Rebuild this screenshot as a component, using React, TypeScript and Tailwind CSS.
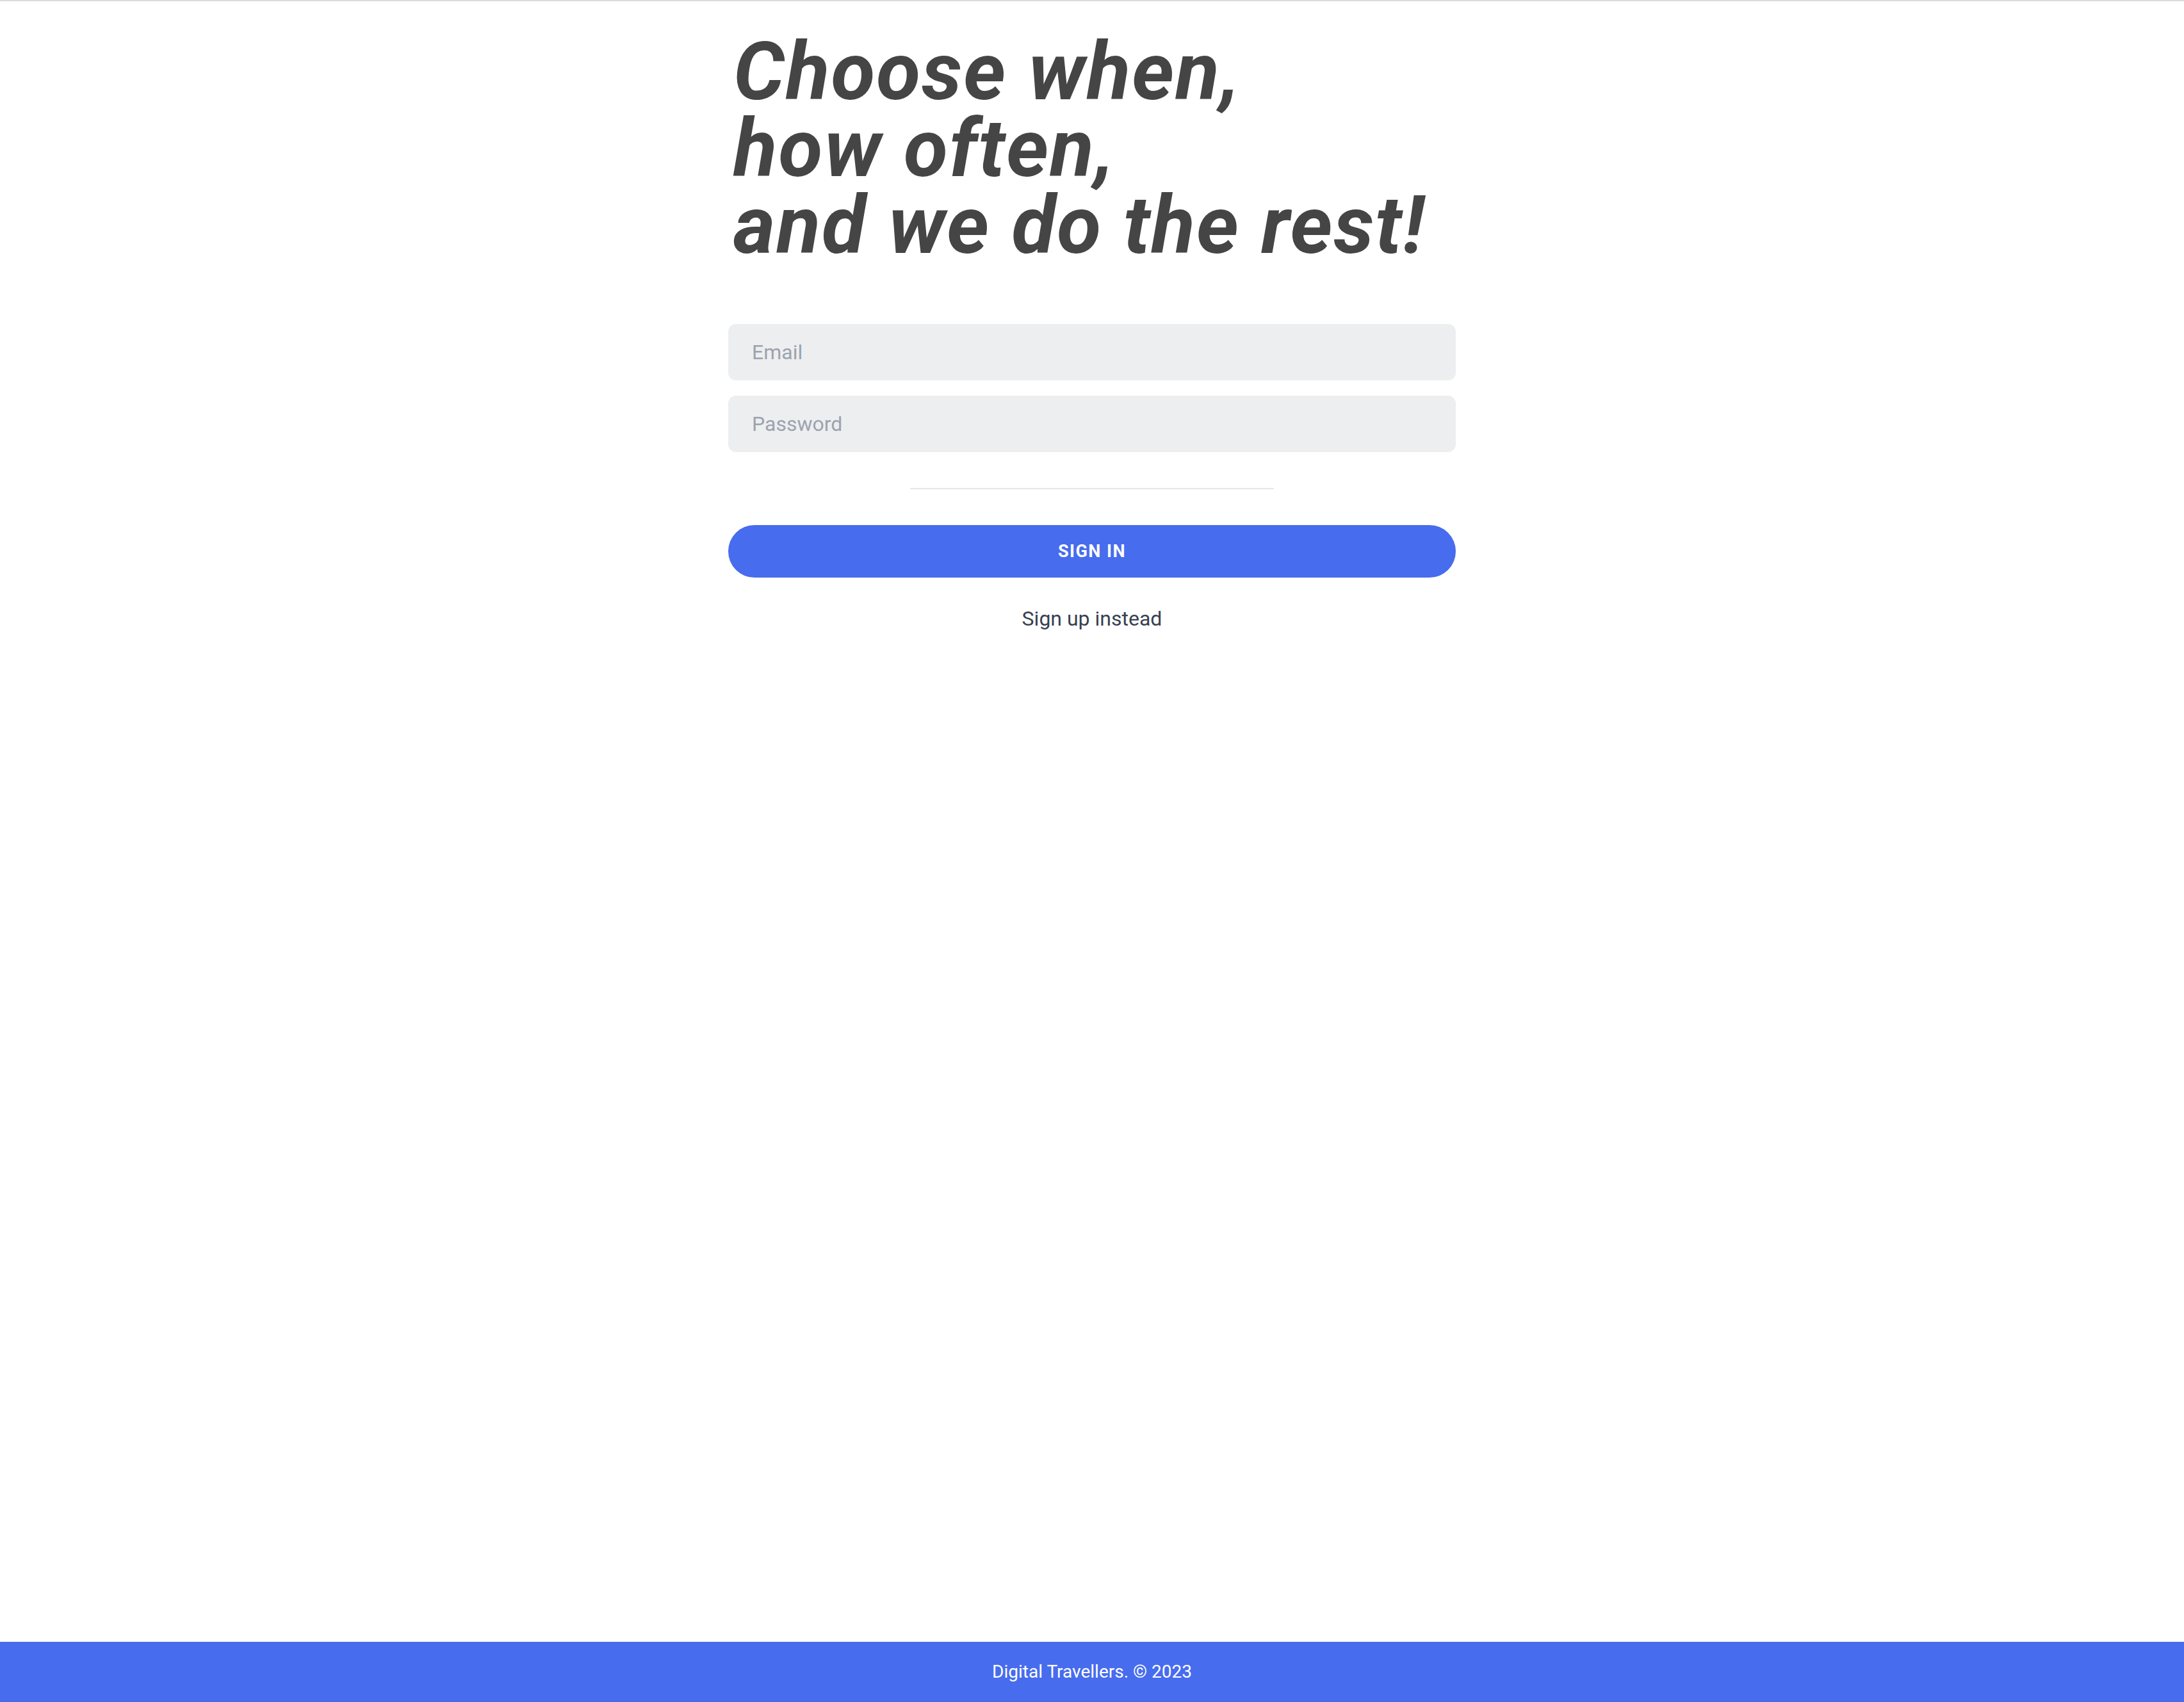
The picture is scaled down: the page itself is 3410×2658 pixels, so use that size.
export default function App() {
  return (
    <div className="min-h-screen flex flex-col bg-white border-t-2 border-[#dcdcdc] font-['Roboto',sans-serif]">
      <main className="flex-1">
        <div className="w-[1136px] mx-auto pt-[50px]">
          <h1 className="pl-[8px] text-[126px] leading-[120px] font-bold italic text-[#454545] tracking-[2px]">
            Choose when,
            <br />
            how often,
            <br />
            and we do the rest!
          </h1>

          <form className="mt-[94px] flex flex-col" onSubmit={(e) => e.preventDefault()}>
            <div className="flex flex-col gap-[24px]">
              <input
                type="email"
                placeholder="Email"
                className="h-[88px] w-full rounded-[12px] bg-[#edeef0] px-[37px] text-[32px] text-[#374151] placeholder:text-[#9ca3af] outline-none"
              />
              <input
                type="password"
                placeholder="Password"
                className="h-[88px] w-full rounded-[12px] bg-[#edeef0] px-[37px] text-[32px] text-[#374151] placeholder:text-[#9ca3af] outline-none"
              />
            </div>

            <div className="mt-[56px] mx-auto w-1/2 h-[2px] bg-[#e5e7eb]" />

            <button
              type="submit"
              className="mt-[56px] h-[82px] w-full rounded-full bg-[#476cee] text-white text-[27px] font-bold tracking-[1.5px]"
            >
              SIGN IN
            </button>

            <button type="button" className="mt-[40px] mx-auto text-[32px] leading-[48px] text-[#374151]">
              Sign up instead
            </button>
          </form>
        </div>
      </main>

      <footer className="h-[94px] flex items-center justify-center bg-[#476cee] text-white text-[28px]">
        Digital Travellers. © 2023
      </footer>
    </div>
  );
}
